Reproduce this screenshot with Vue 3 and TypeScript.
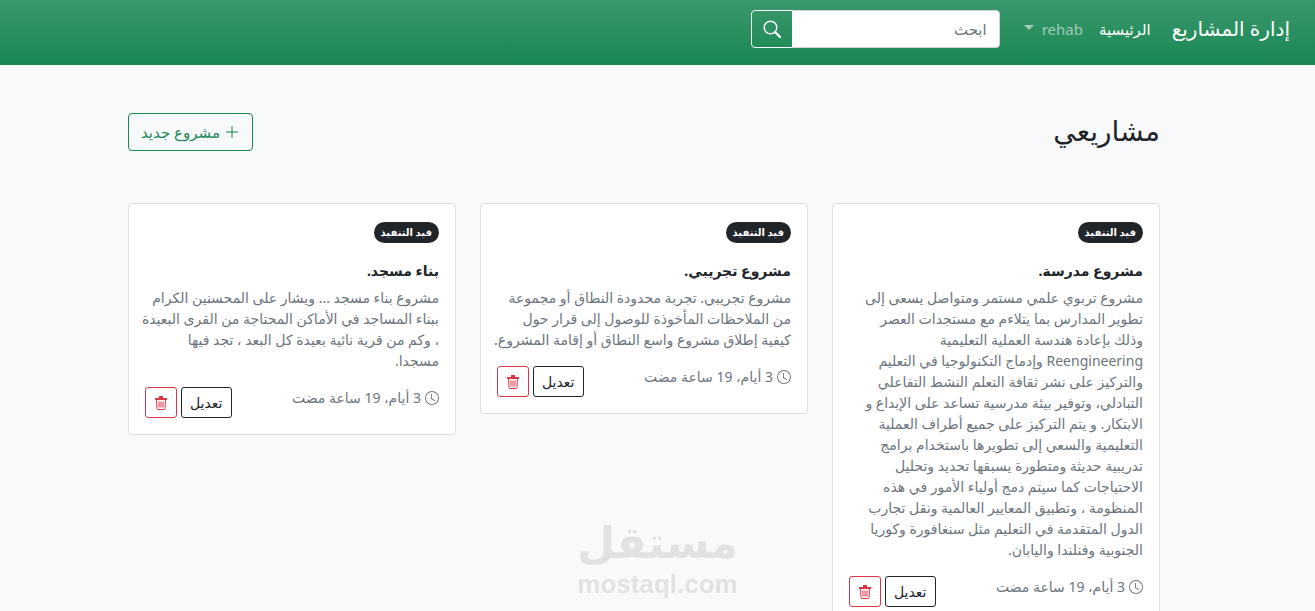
<script setup lang="ts">
import { ref } from 'vue'

interface Project {
  id: number
  status: string
  title: string
  lines: string[]
  age: string
}

const query = ref('')
const status = 'قيد التنفيذ'
const age = '3 أيام، 19 ساعة مضت'

const projects: Project[] = [
  {
    id: 1,
    status,
    title: 'مشروع مدرسة.',
    lines: [
      'مشروع تربوي علمي مستمر ومتواصل يسعى إلى',
      'تطوير المدارس بما يتلاءم مع مستجدات العصر',
      'وذلك بإعادة هندسة العملية التعليمية',
      'Reengineering وإدماج التكنولوجيا في التعليم',
      'والتركيز على نشر ثقافة التعلم النشط التفاعلي',
      'التبادلي، وتوفير بيئة مدرسية تساعد على الإبداع و',
      'الابتكار. و يتم التركيز على جميع أطراف العملية',
      'التعليمية والسعي إلى تطويرها باستخدام برامج',
      'تدريبية حديثة ومتطورة يسبقها تحديد وتحليل',
      'الاحتياجات كما سيتم دمج أولياء الأمور في هذه',
      'المنظومة ، وتطبيق المعايير العالمية ونقل تجارب',
      'الدول المتقدمة في التعليم مثل سنغافورة وكوريا',
      'الجنوبية وفنلندا واليابان.',
    ],
    age,
  },
  {
    id: 2,
    status,
    title: 'مشروع تجريبي.',
    lines: [
      'مشروع تجريبي. تجربة محدودة النطاق أو مجموعة',
      'من الملاحظات المأخوذة للوصول إلى قرار حول',
      'كيفية إطلاق مشروع واسع النطاق أو إقامة المشروع.',
    ],
    age,
  },
  {
    id: 3,
    status,
    title: 'بناء مسجد.',
    lines: [
      'مشروع بناء مسجد ... ويشار على المحسنين الكرام',
      'ببناء المساجد في الأماكن المحتاجة من القرى البعيدة',
      '، وكم من قرية نائية بعيدة كل البعد ، تجد فيها',
      'مسجدا.',
    ],
    age,
  },
]
</script>

<template>
  <div class="page" dir="rtl" lang="ar">
    <header class="navbar">
      <a class="brand" href="#">إدارة المشاريع</a>
      <nav class="nav">
        <a class="nav-link active" href="#">الرئيسية</a>
        <button class="nav-link user" type="button" aria-haspopup="true">
          <span>rehab</span>
          <span class="caret"></span>
        </button>
      </nav>
      <form class="search" role="search" @submit.prevent>
        <input v-model="query" type="search" placeholder="ابحث" aria-label="ابحث" />
        <button type="submit" aria-label="ابحث">
          <svg width="18" height="18" viewBox="0 0 18 18" fill="none" stroke="currentColor" aria-hidden="true">
            <circle cx="7.500" cy="7.500" r="6.300" stroke-width="1.500" />
            <path d="M12 12l5 5" stroke-width="2.400" stroke-linecap="round" />
          </svg>
        </button>
      </form>
    </header>

    <main class="content">
      <div class="heading">
        <h1>مشاريعي</h1>
        <a class="new-project" href="#">
          <svg width="16" height="16" viewBox="0 0 16 16" fill="none" stroke="currentColor" aria-hidden="true">
            <path d="M8 2v12M2 8h12" />
          </svg>
          <span>مشروع جديد</span>
        </a>
      </div>

      <section class="cards">
        <article v-for="project in projects" :key="project.id" class="card">
          <span class="badge">{{ project.status }}</span>
          <h2>{{ project.title }}</h2>
          <p class="description">{{ project.lines.join('\n') }}</p>
          <footer class="card-footer">
            <div class="age">
              <svg width="14" height="14" viewBox="0 0 16 16" fill="currentColor" aria-hidden="true">
                <path d="M8 3.5a.5.5 0 0 0-1 0V9a.5.5 0 0 0 .252.434l3.5 2a.5.5 0 0 0 .496-.868L8 8.71V3.5z" />
                <path d="M8 16A8 8 0 1 0 8 0a8 8 0 0 0 0 16zm7-8A7 7 0 1 1 1 8a7 7 0 0 1 14 0z" />
              </svg>
              <span>{{ project.age }}</span>
            </div>
            <div class="actions">
              <button class="edit" type="button">تعديل</button>
              <button class="delete" type="button" aria-label="حذف">
                <svg width="14" height="14" viewBox="0 0 14 14" fill="none" stroke="currentColor" aria-hidden="true">
                  <path d="M1 2h12v2H1zM5 0h4v2H5z" fill="currentColor" stroke="none" />
                  <path d="M2.500 4l.5 8.500q0 1 1 1h6q1 0 1-1L11.500 4" />
                  <path d="M5 5.500v6M7 5.500v6M9 5.500v6" />
                </svg>
              </button>
            </div>
          </footer>
        </article>
      </section>
    </main>

    <div class="watermark">
      <span class="watermark-name">مستقل</span>
      <span class="watermark-domain" dir="ltr">mostaql.com</span>
    </div>
  </div>
</template>

<style>
body {
  background: #f8f9fb;
}
</style>

<style scoped>
.page {
  height: 100vh;
  overflow: hidden;
  color: #212529;
  font-family: 'Noto Sans', 'DejaVu Sans', sans-serif;
  font-size: 15px;
  line-height: 24px;
}

.page *,
.page *::before {
  box-sizing: border-box;
}

button,
input {
  font-family: inherit;
}

a {
  text-decoration: none;
}

.navbar {
  display: flex;
  align-items: center;
  padding: 10px 25px 17px;
  background: linear-gradient(180deg, #3b986c, #198754);
}

.brand {
  color: #fff;
  font-size: 20px;
  line-height: 30px;
  margin-inline-end: 13px;
  white-space: nowrap;
}

.nav {
  display: flex;
  align-items: center;
}

.nav-link {
  padding: 0 8px;
  border: 0;
  background: none;
  color: rgba(255, 255, 255, 0.55);
  font-size: 15px;
  line-height: 24px;
  white-space: nowrap;
}

.nav-link.active {
  color: #fff;
}

.user {
  display: flex;
  align-items: center;
  gap: 8px;
}

.caret {
  border-top: 5px solid;
  border-inline: 5px solid transparent;
  margin-bottom: 4px;
}

.search {
  display: flex;
  margin-inline-start: 16px;
}

.search input {
  width: 208px;
  height: 38px;
  padding: 6px 12px;
  border: 1px solid #ced4da;
  border-radius: 0 4px 4px 0;
  background: #fff;
  color: #212529;
  font-size: 15px;
  outline: 0;
  appearance: none;
}

.search input::placeholder {
  color: #6c757d;
}

.search button {
  display: flex;
  align-items: center;
  justify-content: center;
  width: 42px;
  height: 38px;
  margin-inline-start: -1px;
  padding: 0;
  border: 1px solid #f8f9fa;
  border-radius: 4px 0 0 4px;
  background: none;
  color: #f8f9fa;
}

.content {
  padding-block: 48px;
  padding-inline: 155px 128px;
}

.heading {
  display: flex;
  align-items: flex-start;
  justify-content: space-between;
  margin-bottom: 52px;
}

.heading h1 {
  margin: 0;
  font-size: 28px;
  font-weight: 500;
  line-height: 34px;
}

.new-project {
  display: flex;
  align-items: center;
  gap: 4px;
  padding: 6px 12px;
  border: 1px solid #198754;
  border-radius: 4px;
  color: #198754;
}

.cards {
  display: grid;
  grid-template-columns: repeat(3, minmax(0, 1fr));
  align-items: start;
  gap: 24px;
}

.card {
  padding: 18px 16px 16px;
  border: 1px solid #dfdfdf;
  border-radius: 4px;
  background: #fff;
}

.badge {
  display: block;
  width: fit-content;
  padding: 0 7px;
  border-radius: 11px;
  background: #212529;
  color: #fff;
  font-size: 10px;
  font-weight: 700;
  line-height: 21px;
}

.card h2 {
  margin: 18px 0 7px;
  font-size: 14px;
  font-weight: 700;
  line-height: 19px;
}

.description {
  margin: 0;
  color: #6c757d;
  font-size: 14px;
  line-height: 21px;
  white-space: pre;
}

.card-footer {
  display: flex;
  align-items: flex-start;
  justify-content: space-between;
  margin-top: 16px;
}

.age {
  display: flex;
  align-items: center;
  gap: 4px;
  color: #6c757d;
  font-size: 14px;
  line-height: 21px;
}

.actions {
  display: flex;
  gap: 4px;
}

.actions button {
  display: flex;
  align-items: center;
  height: 31px;
  padding: 0 8px;
  border: 1px solid;
  border-radius: 3px;
  background: #fff;
  font-size: 14px;
}

.actions .edit {
  color: #212529;
}

.actions .delete {
  color: #dc3545;
}

.watermark {
  position: fixed;
  inset-inline: 0;
  bottom: 12px;
  display: flex;
  flex-direction: column;
  align-items: center;
  color: #e1e2e3;
  font-weight: 700;
  pointer-events: none;
}

.watermark-name {
  font-family: 'DejaVu Sans', sans-serif;
  font-size: 44px;
  line-height: 52px;
}

.watermark-domain {
  font-family: 'Liberation Sans', sans-serif;
  font-size: 26px;
  line-height: 30px;
}
</style>
